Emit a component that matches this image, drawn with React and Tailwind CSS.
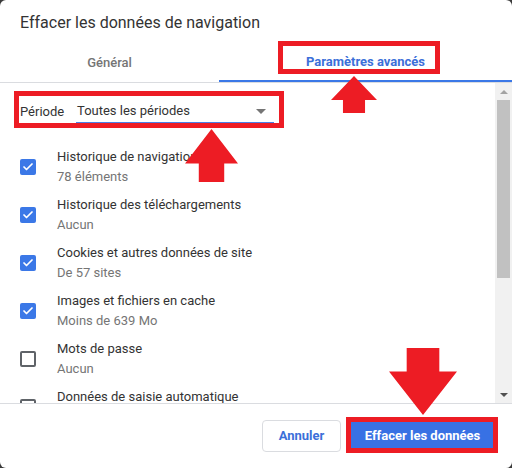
import { Check } from "lucide-react";

const items = [
  { title: "Historique de navigation", sub: "78 éléments", checked: true },
  { title: "Historique des téléchargements", sub: "Aucun", checked: true },
  { title: "Cookies et autres données de site", sub: "De 57 sites", checked: true },
  { title: "Images et fichiers en cache", sub: "Moins de 639 Mo", checked: true },
  { title: "Mots de passe", sub: "Aucun", checked: false },
  { title: "Données de saisie automatique", sub: "\u00a0", checked: false },
];

function Arrow({ className, down = false }) {
  // red paint-style block arrow
  return (
    <svg className={className} viewBox="0 0 50 40" preserveAspectRatio="none">
      <polygon
        points={down ? "13,0 37,0 37,14 50,14 25,40 0,14 13,14" : "25,0 50,26 37,26 37,40 13,40 13,26 0,26"}
        fill="#ed1c24"
      />
    </svg>
  );
}

function Box({ checked }) {
  if (checked)
    return (
      <div className="w-4 h-4 rounded-[2px] bg-[#3b78e7] flex items-center justify-center shrink-0">
        <Check size={12} strokeWidth={3.5} className="text-white" />
      </div>
    );
  return <div className="w-4 h-4 rounded-[2px] border-2 border-[#5f6368] shrink-0" />;
}

export default function App() {
  return (
    <div className="w-[512px] h-[468px] bg-[#3a3a3a] font-['Roboto',sans-serif]">
      <div className="relative w-full h-full bg-white rounded-[6px] flex flex-col overflow-hidden">
        <div className="h-[40px] pl-5 pt-[13px] text-[16px] leading-[20px] text-[#333]">
          Effacer les données de navigation
        </div>

        <div className="h-[43px] flex border-b border-[#dadce0]">
          <div className="w-[219px] flex items-center justify-center pt-[3px] text-[13px] font-medium text-[#757575]">
            Général
          </div>
          <div className="flex-1 flex items-center justify-center pt-[3px] text-[13px] font-bold text-[#3b6fd9] border-b-2 border-[#3b78e7]">
            Paramètres avancés
          </div>
        </div>

        <div className="flex-1 flex overflow-hidden">
          <div className="flex-1 pl-5 pt-[17px]">
            <div className="h-[24px] flex items-center text-[13px] text-[#333]">
              <span className="w-[56px]">Période</span>
              <div className="w-[198px] h-[24px] flex items-center justify-between border-b-2 border-[#4a7fe6] pl-px pr-2">
                <span>Toutes les périodes</span>
                <span className="w-0 h-0 border-l-[5px] border-r-[5px] border-t-[5px] border-l-transparent border-r-transparent border-t-[#757575]" />
              </div>
            </div>
            <div className="mt-[19px]">
              {items.map((it) => (
                <div key={it.title} className="h-[48px] flex items-center">
                  <Box checked={it.checked} />
                  <div className="ml-[21px] text-[13px] leading-[20px]">
                    <div className="text-[#333]">{it.title}</div>
                    <div className="text-[#757575]">{it.sub}</div>
                  </div>
                </div>
              ))}
            </div>
          </div>
          <div className="w-[17px] bg-[#f1f1f1] flex flex-col items-center">
            <div className="h-[17px] flex items-center justify-center">
              <span className="w-0 h-0 border-l-[4px] border-r-[4px] border-b-[4px] border-l-transparent border-r-transparent border-b-[#a3a3a3]" />
            </div>
            <div className="w-[13px] h-[178px] bg-[#c1c1c1]" />
            <div className="flex-1" />
            <div className="h-[17px] flex items-center justify-center">
              <span className="w-0 h-0 border-l-[4px] border-r-[4px] border-t-[4px] border-l-transparent border-r-transparent border-t-[#505050]" />
            </div>
          </div>
        </div>

        <div className="h-[65px] border-t border-[#dadce0] flex items-start justify-end gap-2 pr-4 pt-4">
          <button className="h-[32px] w-[79px] rounded-[4px] border border-[#dadce0] bg-white text-[13px] font-bold text-[#3b6fd9]">
            Annuler
          </button>
          <button className="h-[32px] w-[147px] rounded-[4px] bg-[#3871e4] text-[13px] font-bold text-white">
            Effacer les données
          </button>
        </div>

        {/* annotations */}
        <div className="absolute left-[278px] top-[41px] w-[162px] h-[33px] border-[5px] border-[#ed1c24]" />
        <Arrow className="absolute left-[331px] top-[76px] w-[46px] h-[37px]" />
        <div className="absolute left-[14px] top-[91px] w-[270px] h-[37px] border-[5px] border-[#ed1c24]" />
        <Arrow className="absolute left-[185px] top-[129px] w-[53px] h-[53px]" />
        <div className="absolute left-[346px] top-[417px] w-[152px] h-[36px] border-[5px] border-[#ed1c24]" />
        <Arrow down className="absolute left-[389px] top-[348px] w-[68px] h-[67px]" />
      </div>
    </div>
  );
}
